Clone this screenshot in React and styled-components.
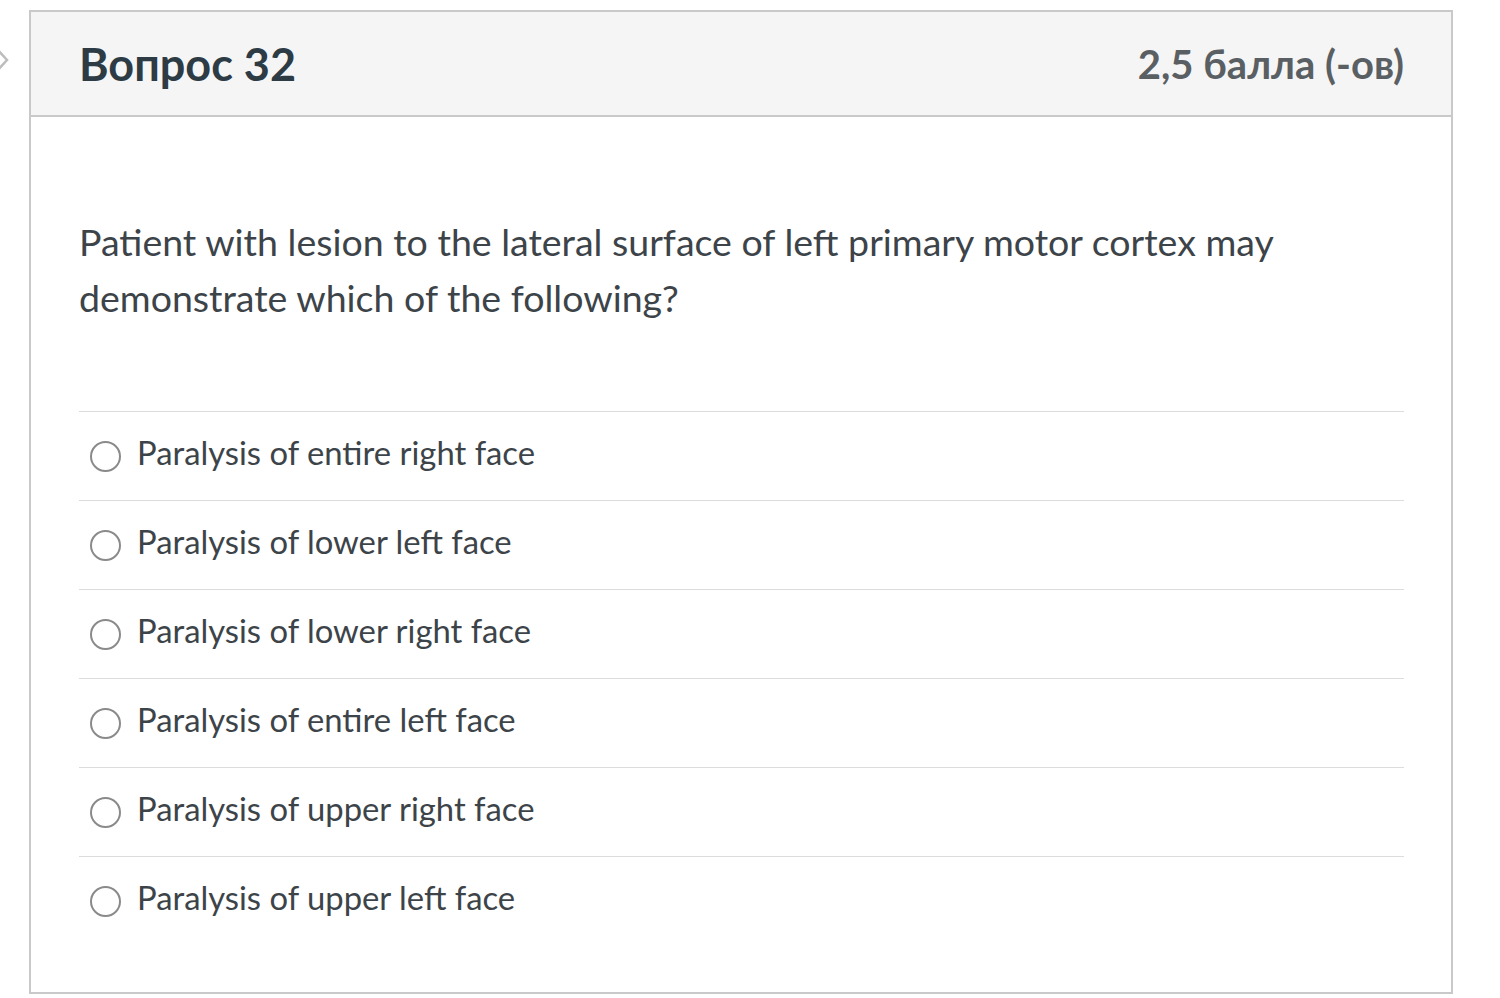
import React from "react";
import styled, { createGlobalStyle } from "styled-components";

const Global = createGlobalStyle`
  html, body { margin: 0; padding: 0; background: #ffffff; }
  body { font-family: Lato, "Open Sans", "Noto Sans", sans-serif; }
`;

const Page = styled.div`
  position: relative;
  width: 1500px;
  height: 998px;
  padding: 10px 0 0 29px;
  box-sizing: border-box;
  overflow: hidden;
`;

const Chevron = styled.svg`
  position: absolute;
  left: -6px;
  top: 46px;
`;

const Card = styled.div`
  width: 1424px;
  height: 984px;
  box-sizing: border-box;
  border: 2px solid #c9c9c9;
  background: #ffffff;
  display: flex;
  flex-direction: column;
`;

const Header = styled.div`
  height: 105px;
  box-sizing: border-box;
  background: #f5f5f5;
  border-bottom: 2px solid #c9c9c9;
  display: flex;
  align-items: center;
  justify-content: space-between;
  padding: 0 47px 0 48px;
`;

const Title = styled.h2`
  margin: 0;
  font-family: Lato, sans-serif;
  font-weight: 700;
  font-size: 45px;
  color: #2d3b45;
`;

const Points = styled.div`
  font-family: Lato, sans-serif;
  font-weight: 700;
  font-size: 40px;
  color: #5a5f63;
`;

const Body = styled.div`
  padding: 97px 47px 0 48px;
`;

const QuestionText = styled.p`
  margin: 0 0 85px;
  font-family: Lato, sans-serif;
  font-size: 37.5px;
  line-height: 56px;
  color: #3d4449;
`;

const Answers = styled.div`
  display: flex;
  flex-direction: column;
`;

const Answer = styled.label`
  height: 89px;
  box-sizing: border-box;
  border-top: 1px solid #dcdcdc;
  display: flex;
  align-items: center;
  gap: 16px;
  padding-left: 11px;
  font-family: Lato, sans-serif;
  font-size: 32.8px;
  color: #3d4449;
`;

const AnswerText = styled.span`
  margin-top: -8px;
`;

const Radio = styled.span`
  width: 31px;
  height: 31px;
  box-sizing: border-box;
  border: 2px solid #8a8a8a;
  border-radius: 50%;
  flex: none;
`;

const answers = [
  "Paralysis of entire right face",
  "Paralysis of lower left face",
  "Paralysis of lower right face",
  "Paralysis of entire left face",
  "Paralysis of upper right face",
  "Paralysis of upper left face",
];

export default function App() {
  return (
    <Page>
      <Global />
      <Chevron width="16" height="28" viewBox="0 0 16 28">
        <polyline points="2,2 13,14 2,26" fill="none" stroke="#bdbdbd" strokeWidth="2.5" />
      </Chevron>
      <Card>
        <Header>
          <Title>Вопрос 32</Title>
          <Points>2,5 балла (-ов)</Points>
        </Header>
        <Body>
          <QuestionText>
            Patient with lesion to the lateral surface of left primary motor cortex may
            <br />
            demonstrate which of the following?
          </QuestionText>
          <Answers>
            {answers.map((a) => (
              <Answer key={a}>
                <Radio />
                <AnswerText>{a}</AnswerText>
              </Answer>
            ))}
          </Answers>
        </Body>
      </Card>
    </Page>
  );
}
